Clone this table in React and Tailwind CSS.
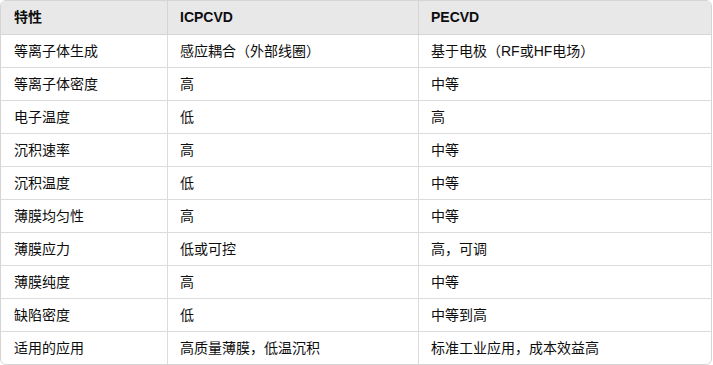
const rows = [
  ['等离子体生成', '感应耦合（外部线圈）', '基于电极（RF或HF电场）'],
  ['等离子体密度', '高', '中等'],
  ['电子温度', '低', '高'],
  ['沉积速率', '高', '中等'],
  ['沉积温度', '低', '中等'],
  ['薄膜均匀性', '高', '中等'],
  ['薄膜应力', '低或可控', '高，可调'],
  ['薄膜纯度', '高', '中等'],
  ['缺陷密度', '低', '中等到高'],
  ['适用的应用', '高质量薄膜，低温沉积', '标准工业应用，成本效益高'],
]

export default function App() {
  return (
    <div
      className="w-[713px] h-[365px] bg-white pt-[0px] pl-[0px]"
      style={{ fontFamily: '"Liberation Sans", Arial, "Noto Sans CJK SC", sans-serif' }}
    >
      <div className="w-[712px] border border-[#d5d5d5] rounded-md overflow-hidden text-[14px] text-[#0d0d0d]">
        {/* Header */}
        <div className="grid grid-cols-[166px_251px_1fr] bg-[#e8e8e8] border-b border-[#d5d5d5] font-bold">
          <div className="h-[33px] flex items-center px-[13px]">特性</div>
          <div className="h-[33px] flex items-center px-[12px] border-l border-[#d5d5d5]">ICPCVD</div>
          <div className="h-[33px] flex items-center px-[12px] border-l border-[#d5d5d5]">PECVD</div>
        </div>

        {/* Rows */}
        {rows.map((r, i) => (
          <div
            key={i}
            className={`grid grid-cols-[166px_251px_1fr] ${i < rows.length - 1 ? 'border-b border-[#dcdcdc]' : ''}`}
          >
            <div className="h-[32px] flex items-center px-[13px]">{r[0]}</div>
            <div className="h-[32px] flex items-center px-[12px] border-l border-[#dcdcdc]">{r[1]}</div>
            <div className="h-[32px] flex items-center px-[12px] border-l border-[#dcdcdc]">{r[2]}</div>
          </div>
        ))}
      </div>
    </div>
  )
}
